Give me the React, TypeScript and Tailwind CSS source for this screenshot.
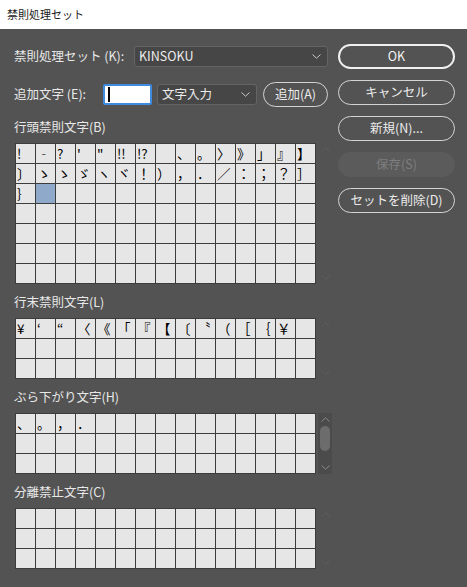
import type { ReactNode } from "react"

const font = "font-['Noto_Sans_CJK_JP','Noto_Sans',sans-serif]"

const leadingChars = [
  "!", "‐", "?", "'", "\"", "!!", "!?", "", "、", "。", "〉", "》", "」", "』", "】",
  "〕", "ゝ", "ゝ", "ゞ", "ヽ", "ヾ", "！", "）", "，", "．", "／", "：", "；", "？", "］",
  "｝",
]

const trailingChars = [
  "¥", "‘", "“", "〈", "《", "「", "『", "【", "〔", "〝", "（", "［", "｛", "￥",
]

const hangingChars = ["、", "。", "，", "．"]

function Chevron({ up, className }: { up?: boolean; className?: string }) {
  return (
    <svg width="9" height="5" viewBox="0 0 9 5" className={className}>
      <path
        d={up ? "M0.5 4.5 L4.5 0.8 L8.5 4.5" : "M0.5 0.5 L4.5 4.2 L8.5 0.5"}
        fill="none"
        stroke="currentColor"
        strokeWidth="1"
      />
    </svg>
  )
}

function Dropdown({ width, children }: { width: string; children: ReactNode }) {
  return (
    <div
      className={`${width} flex h-[21px] items-center justify-between rounded-[3px] border border-[#646464] bg-[#464646] pr-[6px] pl-[4px] text-[12.5px] text-[#ececec]`}
    >
      <span className="whitespace-nowrap">{children}</span>
      <Chevron className="text-[#c8c8c8]" />
    </div>
  )
}

function CharGrid({
  rows,
  chars,
  selected,
}: {
  rows: number
  chars: string[]
  selected?: number
}) {
  const cells = Array.from({ length: rows * 15 }, (_, i) => chars[i] ?? "")
  return (
    <div className="grid w-fit auto-rows-[19px] grid-cols-[repeat(15,19px)] gap-px border border-[#3c3c3c] bg-[#3c3c3c]">
      {cells.map((c, i) => (
        <div
          key={i}
          className={`${
            i === selected ? "bg-[#8fa9cb]" : "bg-[#e6e6e6]"
          } overflow-hidden pl-px text-[13.5px] leading-[19px] whitespace-nowrap text-black`}
        >
          {c}
        </div>
      ))}
    </div>
  )
}

function ScrollBar({ active }: { active?: boolean }) {
  return (
    <div
      className={`ml-[2px] flex w-[14px] flex-col items-center py-[4px] ${
        active ? "bg-[#4b4b4b] text-[#8a8a8a]" : "text-[#5e5e5e]"
      }`}
    >
      <Chevron up />
      {active && (
        <div className="mt-[4px] h-[25px] w-[10px] rounded-full bg-[#6c6c6c]" />
      )}
      <Chevron className="mt-auto" />
    </div>
  )
}

function Section({
  label,
  rows,
  chars,
  selected,
  activeScroll,
  first,
}: {
  label: string
  rows: number
  chars: string[]
  selected?: number
  activeScroll?: boolean
  first?: boolean
}) {
  return (
    <div className={`${first ? "mt-[10px]" : "mt-[8px]"} flex flex-col`}>
      <div className="flex h-[20px] items-center pl-[14px] text-[12.5px] whitespace-nowrap text-[#e8e8e8]">
        {label}
      </div>
      <div className="mt-[6px] flex pl-[15px]">
        <CharGrid rows={rows} chars={chars} selected={selected} />
        <ScrollBar active={activeScroll} />
      </div>
    </div>
  )
}

function PillButton({
  children,
  primary,
  disabled,
}: {
  children: ReactNode
  primary?: boolean
  disabled?: boolean
}) {
  const look = disabled
    ? "border border-transparent bg-[#5b5b5b] text-[#7e7e7e]"
    : primary
      ? "border-2 border-[#f0f0f0] text-[#f2f2f2]"
      : "border border-[#d4d4d4] text-[#ececec]"
  return (
    <div
      className={`flex h-[25px] w-[117px] items-center justify-center rounded-full text-[12.5px] whitespace-nowrap ${look}`}
    >
      {children}
    </div>
  )
}

export default function App() {
  return (
    <div className={`${font} h-[587px] w-[467px] overflow-hidden bg-[#535353]`}>
      <div className="flex h-[29px] items-center bg-white pl-[7px] text-[11px] text-[#1a1a1a]">
        禁則処理セット
      </div>
      <div className="flex">
        <div className="flex w-[338px] flex-col pt-[17px]">
          <div className="flex h-[21px] items-center">
            <div className="w-[134px] pl-[14px] text-[12.5px] whitespace-nowrap text-[#e8e8e8]">
              禁則処理セット (K):
            </div>
            <Dropdown width="w-[194px]">KINSOKU</Dropdown>
          </div>
          <div className="mt-[15px] flex h-[25px] items-center">
            <div className="w-[103px] pl-[14px] text-[12.5px] whitespace-nowrap text-[#e8e8e8]">
              追加文字 (E):
            </div>
            <div className="flex h-[21px] w-[49px] items-center rounded-[2px] border-2 border-[#3f8be0] bg-white pl-[3px]">
              <div className="h-[15px] w-[1.5px] bg-black" />
            </div>
            <div className="ml-[5px]">
              <Dropdown width="w-[100px]">文字入力</Dropdown>
            </div>
            <div className="ml-[6px] flex h-[25px] w-[65px] items-center justify-center rounded-full border border-[#d4d4d4] text-[12.5px] whitespace-nowrap text-[#ececec]">
              追加(A)
            </div>
          </div>
          <Section
            label="行頭禁則文字(B)"
            rows={7}
            chars={leadingChars}
            selected={31}
            first
          />
          <Section label="行末禁則文字(L)" rows={3} chars={trailingChars} />
          <Section
            label="ぶら下がり文字(H)"
            rows={3}
            chars={hangingChars}
            activeScroll
          />
          <Section label="分離禁止文字(C)" rows={3} chars={[]} />
        </div>
        <div className="flex w-[117px] flex-col gap-[11px] pt-[15px]">
          <PillButton primary>OK</PillButton>
          <PillButton>キャンセル</PillButton>
          <PillButton>新規(N)...</PillButton>
          <PillButton disabled>保存(S)</PillButton>
          <PillButton>セットを削除(D)</PillButton>
        </div>
      </div>
    </div>
  )
}
